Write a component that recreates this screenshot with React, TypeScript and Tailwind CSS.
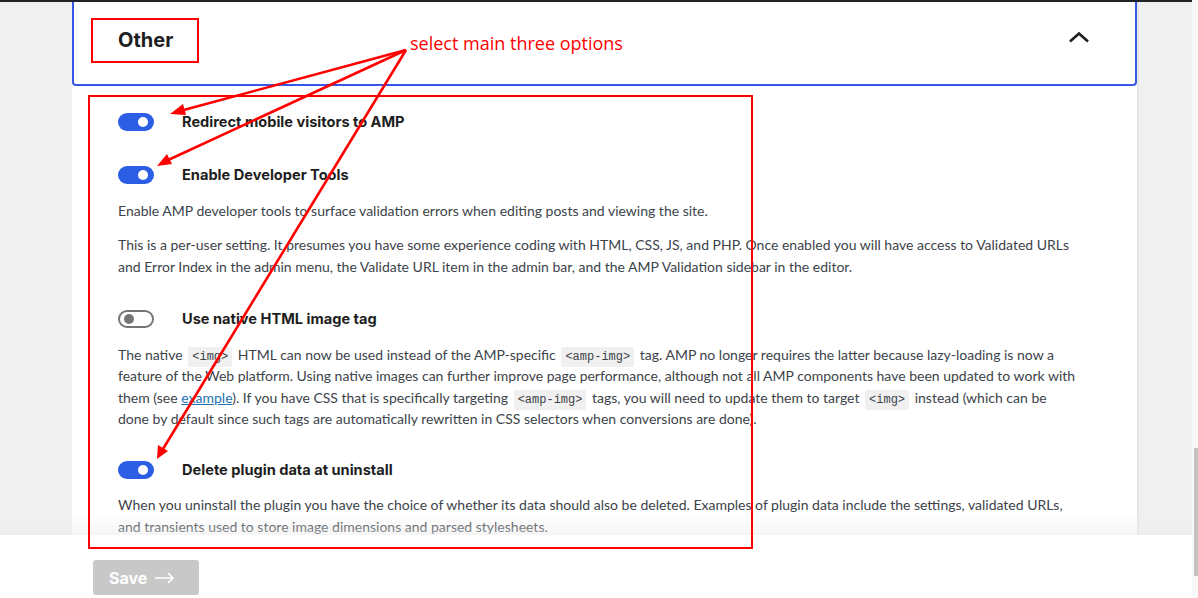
import React from 'react';

const body = { fontFamily: 'Lato, "Open Sans", sans-serif' };
const heading = { fontFamily: 'Inter, "Noto Sans", sans-serif' };
const mono = { fontFamily: '"Liberation Mono", "DejaVu Sans Mono", monospace' };

function Toggle({ on }: { on: boolean }) {
  if (on) {
    return (
      <span className="flex h-[18px] w-[36px] shrink-0 items-center justify-end rounded-full bg-[#2c5de5] pr-[6px]">
        <span className="h-[10px] w-[10px] rounded-full bg-white" />
      </span>
    );
  }
  return (
    <span className="flex h-[18px] w-[36px] shrink-0 items-center rounded-full border-2 border-[#757575] bg-white pl-[4px]">
      <span className="h-[10px] w-[10px] rounded-full bg-[#757575]" />
    </span>
  );
}

function Code({ children }: { children: React.ReactNode }) {
  return (
    <code style={mono} className="mx-[2px] rounded-[2px] bg-[#f0f0f0] px-[4px] py-[3px] text-[12px] leading-none text-[#3c434a]">
      {children}
    </code>
  );
}

function SettingRow({ on, label }: { on: boolean; label: string }) {
  return (
    <div className="flex h-[18px] items-center gap-[28px]">
      <Toggle on={on} />
      <span style={heading} className="text-[14.6px] font-bold leading-[18px] text-[#1e1e1e]">
        {label}
      </span>
    </div>
  );
}

export default function App() {
  return (
    <div className="relative flex h-[598px] w-[1198px] overflow-hidden bg-[#f0f0f0]">
      <div className="flex flex-1 flex-col">
        <div className="h-[2px] bg-[#1d2327]" />
        <div className="relative flex-1 overflow-hidden pl-[72px] pr-[53px]">
          <div className="h-full border-r-2 border-[#e6e6e6] bg-white">
            {/* collapsible header */}
            <div className="flex h-[84px] items-center justify-between rounded-b-[4px] border-x-2 border-b-2 border-[#3858e9] bg-white pb-[6px] pl-[44px] pr-[45px]">
              <h2 style={heading} className="text-[20px] font-bold text-[#1e1e1e]">
                Other
              </h2>
              <svg className="-mt-[6px]" width="22" height="12" viewBox="0 0 22 12" fill="none">
                <path d="M2 10.5 11 2.5l9 8" stroke="#1e1e1e" strokeWidth="2.6" />
              </svg>
            </div>

            <div style={body} className="pl-[46px] text-[14px] leading-[22px] text-[#3c434a]">
              <div className="pt-[27px]">
                <SettingRow on label="Redirect mobile visitors to AMP" />
              </div>

              <div className="mt-[35px]">
                <SettingRow on label="Enable Developer Tools" />
                <p className="mt-[16px] whitespace-nowrap">
                  Enable AMP developer tools to surface validation errors when editing posts and viewing the site.
                </p>
                <p className="mt-[12px] whitespace-nowrap">
                  This is a per-user setting. It presumes you have some experience coding with HTML, CSS, JS, and PHP. Once enabled you will have access to Validated URLs
                  <br />
                  and Error Index in the admin menu, the Validate URL item in the admin bar, and the AMP Validation sidebar in the editor.
                </p>
              </div>

              <div className="mt-[32px]">
                <SettingRow on={false} label="Use native HTML image tag" />
                <p className="mt-[16px] whitespace-nowrap leading-[21.3px]">
                  The native <Code>&lt;img&gt;</Code> HTML can now be used instead of the AMP-specific <Code>&lt;amp-img&gt;</Code> tag. AMP no longer requires the latter because lazy-loading is now a
                  <br />
                  feature of the Web platform. Using native images can further improve page performance, although not all AMP components have been updated to work with
                  <br />
                  them (see <a className="text-[#2271b1] underline">example</a>). If you have CSS that is specifically targeting <Code>&lt;amp-img&gt;</Code> tags, you will need to update them to target <Code>&lt;img&gt;</Code> instead (which can be
                  <br />
                  done by default since such tags are automatically rewritten in CSS selectors when conversions are done).
                </p>
              </div>

              <div className="mt-[32px]">
                <SettingRow on label="Delete plugin data at uninstall" />
                <p className="mt-[15px] whitespace-nowrap">
                  When you uninstall the plugin you have the choice of whether its data should also be deleted. Examples of plugin data include the settings, validated URLs,
                  <br />
                  and transients used to store image dimensions and parsed stylesheets.
                </p>
              </div>
            </div>
          </div>
          {/* fade at the bottom of the scroll area */}
          <div className="pointer-events-none absolute inset-x-0 bottom-0 h-[20px] bg-gradient-to-b from-transparent to-[#ececec]/50" />
        </div>

        <footer className="h-[63px] shrink-0 bg-white pl-[93px] pt-[25px]">
          <button
            style={heading}
            className="flex h-[35px] w-[106px] items-center gap-[8px] rounded-[3px] bg-[#c8c8c8] pl-[16px] text-[16px] font-bold text-white"
          >
            Save
            <svg width="20" height="12" viewBox="0 0 20 12" fill="none">
              <path d="M0 6h18M13 1l5 5-5 5" stroke="white" strokeWidth="1.6" />
            </svg>
          </button>
        </footer>
      </div>

      {/* scrollbar */}
      <div className="flex w-[6px] flex-col bg-[#f8f8f8] pt-[448px]">
        <div className="ml-[2px] h-[128px] w-[4px] bg-[#c1c1c1]" />
      </div>

      {/* red annotation layer */}
      <div className="pointer-events-none absolute inset-0">
        <div className="absolute left-[91px] top-[18px] h-[45px] w-[108px] border-2 border-[#ff0000]" />
        <div className="absolute left-[88px] top-[95px] h-[454px] w-[665px] border-2 border-[#ff0000]" />
        <span
          style={{ fontFamily: '"Open Sans", sans-serif' }}
          className="absolute left-[410px] top-[31px] text-[18px] leading-[24px] text-[#ff0000]"
        >
          select main three options
        </span>
        <svg className="absolute inset-0" width="1198" height="598">
          <g stroke="#ff0000" strokeWidth="2.6" fill="none">
            <line x1="406" y1="50" x2="180" y2="111" />
            <line x1="406" y1="50" x2="166" y2="161" />
            <line x1="406" y1="50" x2="163" y2="449" />
          </g>
          <g fill="#ff0000">
            <polygon points="170,114 183,104 186,115" />
            <polygon points="157,166 167,154 172,164" />
            <polygon points="157,459 158,445 168,451" />
          </g>
        </svg>
      </div>
    </div>
  );
}
